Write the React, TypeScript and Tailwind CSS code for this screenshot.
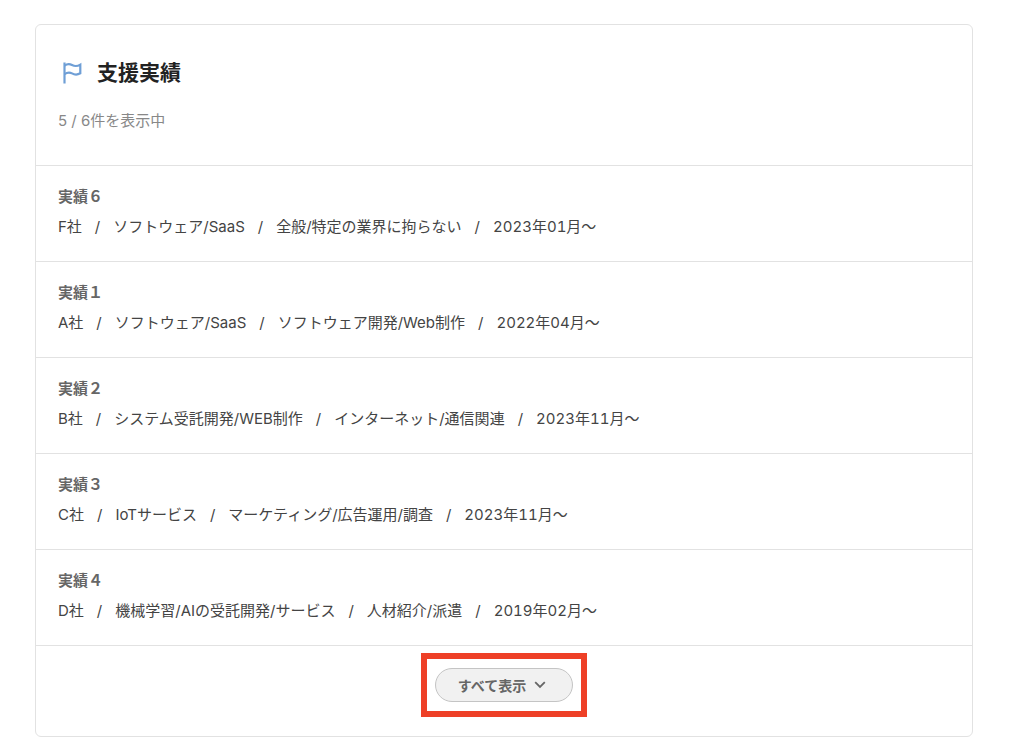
import { Fragment } from 'react';

interface Achievement {
  title: string;
  details: string[];
}

const achievements: Achievement[] = [
  { title: '実績６', details: ['F社', 'ソフトウェア/SaaS', '全般/特定の業界に拘らない', '2023年01月〜'] },
  { title: '実績１', details: ['A社', 'ソフトウェア/SaaS', 'ソフトウェア開発/Web制作', '2022年04月〜'] },
  { title: '実績２', details: ['B社', 'システム受託開発/WEB制作', 'インターネット/通信関連', '2023年11月〜'] },
  { title: '実績３', details: ['C社', 'IoTサービス', 'マーケティング/広告運用/調査', '2023年11月〜'] },
  { title: '実績４', details: ['D社', '機械学習/AIの受託開発/サービス', '人材紹介/派遣', '2019年02月〜'] },
];

function FlagIcon() {
  return (
    <svg width="20" height="22" viewBox="0 0 20 22" fill="none" stroke="currentColor" strokeWidth="2.2" aria-hidden="true">
      <path d="M2.5 0.5V21.5" />
      <path d="M2.5 3.6C5 1.8 7.5 1.6 10 3C13 4.6 15.5 4.3 18.3 2.6V11.3C15.5 13 13 13.2 10 11.4C7.5 10 5 10.4 2.5 12.2" />
    </svg>
  );
}

function AchievementRow({ title, details }: Achievement) {
  return (
    <li className="border-t border-[#e2e2e2] px-[22px] pt-[18px] pb-[17px]">
      <h3 className="text-[15px] leading-[26px] font-bold text-[#666]">{title}</h3>
      <p className="flex flex-wrap gap-x-[13px] text-[15px] leading-[34px] text-[#444] tabular-nums">
        {details.map((detail, index) => (
          <Fragment key={detail}>
            {index > 0 && <span>/</span>}
            <span>{detail}</span>
          </Fragment>
        ))}
      </p>
    </li>
  );
}

export default function App() {
  return (
    <main className="bg-white pt-6 pr-[51px] pb-4 pl-[35px] font-['Inter','Noto_Sans_CJK_JP',sans-serif]">
      <section className="rounded-md border border-[#e2e2e2]">
        {/* Header */}
        <div className="px-[22px] pt-8 pb-8">
          <h2 className="flex items-center gap-[15px] pl-1 text-[21px] leading-8 font-bold text-[#222]">
            <span className="text-[#6f9fd6]">
              <FlagIcon />
            </span>
            支援実績
          </h2>
          <p className="mt-5 text-[15px] leading-6 text-[#888]">5 / 6件を表示中</p>
        </div>

        <ul>
          {achievements.map(achievement => (
            <AchievementRow key={achievement.title} {...achievement} />
          ))}
        </ul>

        {/* Show all */}
        <div className="flex justify-center border-t border-[#e2e2e2] pt-[7px] pb-[19px]">
          <div className="border-6 border-[#ee4027] px-2 py-[9px]">
            <button
              type="button"
              className="flex h-[34px] w-[138px] cursor-pointer items-center justify-center gap-2 rounded-full border border-[#c4c4c4] bg-[#f1f1f1] pr-1 text-[14px] font-bold text-[#666]"
            >
              すべて表示
              <svg width="12" height="8" viewBox="0 0 12 8" fill="none" stroke="currentColor" strokeWidth="1.8" aria-hidden="true">
                <path d="M1.2 1.2L6 6L10.8 1.2" />
              </svg>
            </button>
          </div>
        </div>
      </section>
    </main>
  );
}
